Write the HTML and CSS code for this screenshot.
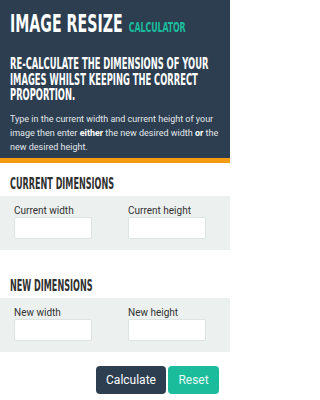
FILE: index.html
```html
<!DOCTYPE html>
<html>
<head>
<meta charset="utf-8">
<link rel="stylesheet" href="styles.css">
</head>
<body>
<header class="hero">
  <h1 class="title cond">Image Resize <span class="tag">Calculator</span></h1>
  <p class="lead cond">Re-calculate the dimensions of your images whilst keeping the correct proportion.</p>
  <p class="intro">Type in the current width and current height of your image then enter <b>either</b> the new desired width <b>or</b> the new desired height.</p>
</header>
<form class="calc">
  <section class="group">
    <h2 class="group-title cond">Current Dimensions</h2>
    <div class="fields">
      <label class="field"><span class="label">Current width</span><input class="input" type="text"></label>
      <label class="field"><span class="label">Current height</span><input class="input" type="text"></label>
    </div>
  </section>
  <section class="group group-new">
    <h2 class="group-title cond">New Dimensions</h2>
    <div class="fields">
      <label class="field"><span class="label">New width</span><input class="input" type="text"></label>
      <label class="field"><span class="label">New height</span><input class="input" type="text"></label>
    </div>
  </section>
  <div class="actions">
    <button type="button" class="btn btn-dark">Calculate</button>
    <button type="reset" class="btn btn-teal">Reset</button>
  </div>
</form>
</body>
</html>
```
FILE: styles.css
```css
* { box-sizing: border-box; }
html { overflow: hidden; }
html, body { margin: 0; padding: 0; }
body {
  width: 230px;
  background: #ffffff;
  font-family: Roboto, "Liberation Sans", sans-serif;
  overflow: hidden;
}
.cond {
  --s: 0.6;
  font-family: "Liberation Sans Narrow", "DejaVu Sans Condensed", "Liberation Sans", sans-serif;
  font-weight: bold;
  text-transform: uppercase;
  transform: scaleX(var(--s));
  transform-origin: 0 0;
  width: calc(100% / var(--s));
}
.hero {
  background: #2c3e50;
  color: #ffffff;
  padding: 9px 10px 4px;
  border-bottom: 5px solid #f39c12;
}
.title {
  --s: 0.63;
  margin: 0;
  font-size: 25px;
  line-height: 30px;
  color: #ffffff;
  white-space: nowrap;
}
.tag {
  font-size: 14px;
  color: #1abc9c;
  margin-left: 2px;
  letter-spacing: -0.2px;
}
.lead {
  --s: 0.62;
  margin: 15px 0 0;
  font-size: 15px;
  line-height: 15.5px;
  color: #ffffff;
}
.intro {
  margin: 8px 0 0;
  font-size: 9px;
  line-height: 14px;
  color: #e4e8eb;
}
.intro b { font-weight: bold; color: #ffffff; }
.calc { margin: 0; }
.group-title {
  margin: 0;
  padding: 12px calc(10px / var(--s)) 3px;
  font-size: 15px;
  line-height: 18px;
  color: #2f2f2f;
}
.group-new { margin-top: 15px; }
.fields {
  background: #ecf0ef;
  display: grid;
  grid-template-columns: 114px 1fr;
  padding: 9px 14px 11px;
}
.field { display: flex; flex-direction: column; }
.label {
  font-size: 10px;
  line-height: 12px;
  color: #333333;
}
.input {
  width: 78px;
  height: 22px;
  margin: 0;
  border: 1px solid #dde2e2;
  border-radius: 2px;
  background: #ffffff;
  padding: 0 4px;
}
.actions {
  display: flex;
  justify-content: flex-end;
  gap: 2px;
  padding: 14px 11px 0;
}
.btn {
  height: 28px;
  padding: 0 10px;
  border: none;
  border-radius: 4px;
  font-family: Roboto, "Liberation Sans", sans-serif;
  font-size: 12px;
  color: #ffffff;
}
.btn-dark { background: #2c3e50; width: 70px; }
.btn-teal { background: #1abc9c; width: 51px; color: #eafaf6; }
```
